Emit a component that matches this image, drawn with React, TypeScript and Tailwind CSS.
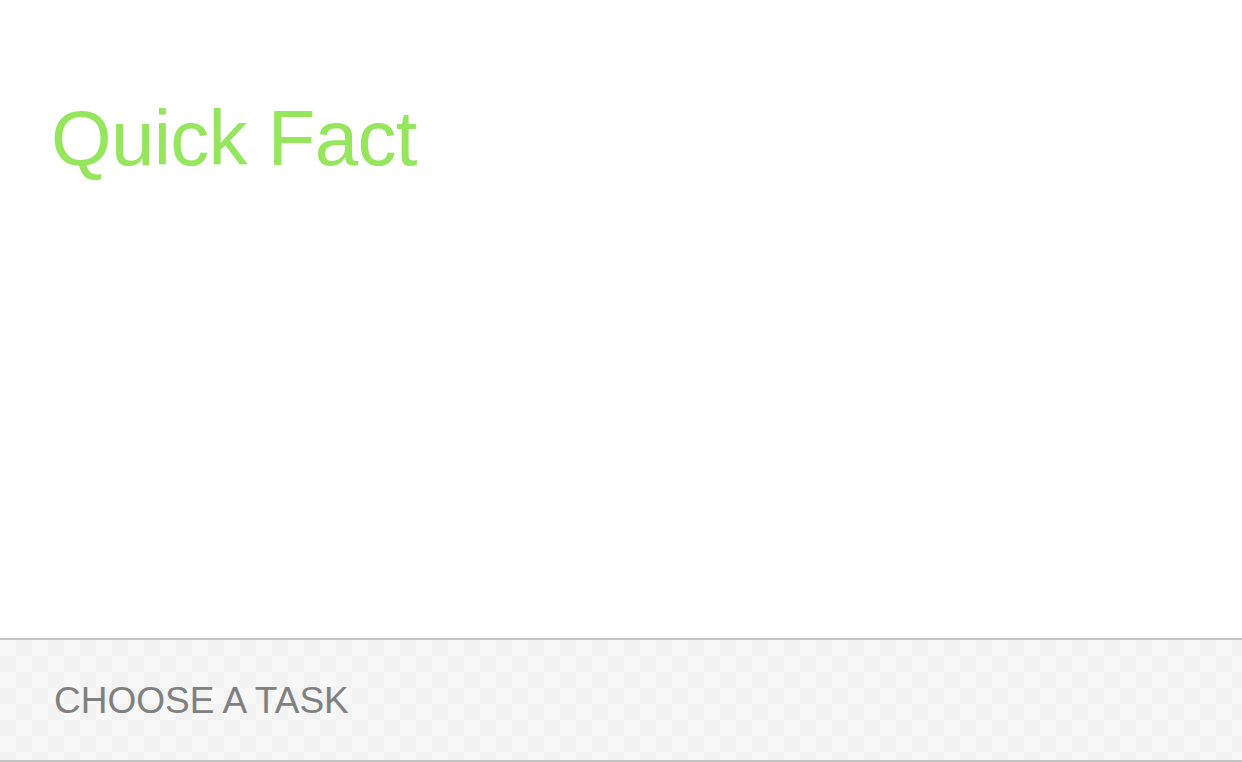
export default function App() {
  return (
    <div className="flex h-[762px] w-full flex-col bg-white font-['Liberation_Sans',Arial,sans-serif]">
      {/* heading */}
      <div className="flex-1 pl-[51px] pt-[99px]">
        <h1 className="text-[78px] leading-none tracking-[-0.7px] text-[#95e55d]">Quick Fact</h1>
      </div>

      {/* task bar */}
      <div className="flex h-[124px] items-center border-y-2 border-[#c4c4c4] bg-[#f6f6f6] bg-[conic-gradient(#f2f2f2_25%,#f8f8f8_0_50%,#f2f2f2_0_75%,#f8f8f8_0)] bg-[length:32px_32px] pl-[54px]">
        <span className="text-[37px] leading-none text-[#808080]">CHOOSE A TASK</span>
      </div>
    </div>
  );
}
